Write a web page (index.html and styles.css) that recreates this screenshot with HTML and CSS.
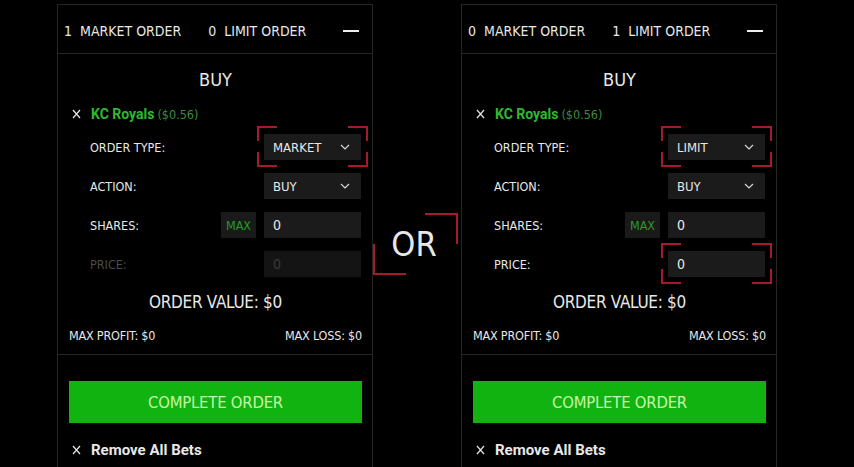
FILE: index.html
```html
<!DOCTYPE html>
<html lang="en">
<head>
	<meta charset="UTF-8">
	<title>Order Ticket</title>
	<link rel="stylesheet" href="styles.css">
</head>
<body>
	<div class="stage">

		<!-- market order ticket -->
		<section class="ticket">
			<div class="ticket-head">
				<span class="tab">1&nbsp; MARKET ORDER</span>
				<span class="tab">0&nbsp; LIMIT ORDER</span>
				<span class="minus"></span>
			</div>
			<div class="ticket-body">
				<div class="side">BUY</div>
				<div class="bet">
					<svg class="x-icon" width="9" height="10" viewBox="0 0 9 10"><path d="M1 1 L8 9 M8 1 L1 9" stroke="#e6e6e6" stroke-width="1.2" fill="none"/></svg>
					<span class="team">KC Royals</span>
					<span class="price">($0.56)</span>
				</div>
				<div class="row">
					<span class="label">ORDER TYPE:</span>
					<div class="field hl">
						<div class="select">MARKET
							<svg width="10" height="6" viewBox="0 0 10 6"><path d="M1 1 L5 5 L9 1" stroke="#ddd" stroke-width="1.1" fill="none"/></svg>
						</div>
					</div>
				</div>
				<div class="row">
					<span class="label">ACTION:</span>
					<div class="field">
						<div class="select">BUY
							<svg width="10" height="6" viewBox="0 0 10 6"><path d="M1 1 L5 5 L9 1" stroke="#ddd" stroke-width="1.1" fill="none"/></svg>
						</div>
					</div>
				</div>
				<div class="row">
					<span class="label">SHARES:</span>
					<span class="max">MAX</span>
					<div class="field">
						<div class="input">0</div>
					</div>
				</div>
				<div class="row off">
					<span class="label">PRICE:</span>
					<div class="field">
						<div class="input">0</div>
					</div>
				</div>
				<div class="value">ORDER VALUE: $0</div>
				<div class="limits">
					<span>MAX PROFIT: $0</span>
					<span>MAX LOSS: $0</span>
				</div>
			</div>
			<div class="ticket-foot">
				<button class="complete">COMPLETE ORDER</button>
				<div class="remove">
					<svg class="x-icon" width="9" height="10" viewBox="0 0 9 10"><path d="M1 1 L8 9 M8 1 L1 9" stroke="#e6e6e6" stroke-width="1.2" fill="none"/></svg>
					<span>Remove All Bets</span>
				</div>
			</div>
		</section>

		<div class="or-col">
			<div class="or">OR</div>
		</div>

		<!-- limit order ticket -->
		<section class="ticket">
			<div class="ticket-head">
				<span class="tab">0&nbsp; MARKET ORDER</span>
				<span class="tab">1&nbsp; LIMIT ORDER</span>
				<span class="minus"></span>
			</div>
			<div class="ticket-body">
				<div class="side">BUY</div>
				<div class="bet">
					<svg class="x-icon" width="9" height="10" viewBox="0 0 9 10"><path d="M1 1 L8 9 M8 1 L1 9" stroke="#e6e6e6" stroke-width="1.2" fill="none"/></svg>
					<span class="team">KC Royals</span>
					<span class="price">($0.56)</span>
				</div>
				<div class="row">
					<span class="label">ORDER TYPE:</span>
					<div class="field hl">
						<div class="select">LIMIT
							<svg width="10" height="6" viewBox="0 0 10 6"><path d="M1 1 L5 5 L9 1" stroke="#ddd" stroke-width="1.1" fill="none"/></svg>
						</div>
					</div>
				</div>
				<div class="row">
					<span class="label">ACTION:</span>
					<div class="field">
						<div class="select">BUY
							<svg width="10" height="6" viewBox="0 0 10 6"><path d="M1 1 L5 5 L9 1" stroke="#ddd" stroke-width="1.1" fill="none"/></svg>
						</div>
					</div>
				</div>
				<div class="row">
					<span class="label">SHARES:</span>
					<span class="max">MAX</span>
					<div class="field">
						<div class="input">0</div>
					</div>
				</div>
				<div class="row">
					<span class="label">PRICE:</span>
					<div class="field hl">
						<div class="input">0</div>
					</div>
				</div>
				<div class="value">ORDER VALUE: $0</div>
				<div class="limits">
					<span>MAX PROFIT: $0</span>
					<span>MAX LOSS: $0</span>
				</div>
			</div>
			<div class="ticket-foot">
				<button class="complete">COMPLETE ORDER</button>
				<div class="remove">
					<svg class="x-icon" width="9" height="10" viewBox="0 0 9 10"><path d="M1 1 L8 9 M8 1 L1 9" stroke="#e6e6e6" stroke-width="1.2" fill="none"/></svg>
					<span>Remove All Bets</span>
				</div>
			</div>
		</section>

	</div>
</body>
</html>
```

FILE: styles.css
```css
body {
	margin: 0;
	background: #000;
	color: #e8e8e8;
	font-family: "DejaVu Sans Condensed", "Liberation Sans", sans-serif;
	overflow: hidden;
}

.stage {
	display: flex;
	padding: 4px 0 0 57px;
}

/* ticket panel */
.ticket {
	width: 316px;
	height: 480px;
	box-sizing: border-box;
	border: 1px solid #262626;
	border-bottom: none;
}

.ticket-head {
	display: flex;
	align-items: center;
	box-sizing: border-box;
	height: 49px;
	padding: 3px 13px 0 6px;
	border-bottom: 1px solid #262626;
	font-size: 14px;
}
.tab {
	margin-right: 27px;
}
.minus {
	margin-left: auto;
	width: 16px;
	height: 2px;
	background: #eee;
}

.ticket-body {
	padding: 0 10px 10px 11px;
	border-bottom: 1px solid #262626;
}

.side {
	margin-top: 16px;
	font-size: 18px;
	line-height: 20px;
	text-align: center;
}

.bet {
	display: flex;
	align-items: center;
	margin-top: 14px;
	height: 20px;
	padding-left: 3px;
}
.x-icon {
	margin-right: 10px;
}
.team {
	font-family: Roboto, sans-serif;
	font-weight: bold;
	font-size: 14px;
	color: #2fb82f;
	margin-right: 3px;
}
.price {
	font-size: 12.5px;
	color: #3d8c3d;
}

/* form rows */
.row {
	display: flex;
	align-items: center;
	height: 26px;
	margin-top: 13px;
	padding-left: 21px;
	font-size: 12.5px;
}
.bet + .row {
	margin-top: 10px;
}
.label {
	margin-right: auto;
}
.field {
	position: relative;
	width: 97px;
	height: 26px;
	margin-right: 1px;
}
.select, .input {
	display: flex;
	align-items: center;
	justify-content: space-between;
	box-sizing: border-box;
	height: 100%;
	padding: 0 11px 0 9px;
	background: #1b1b1b;
	font-size: 13px;
}
.input {
	font-size: 14px;
}
.max {
	display: flex;
	align-items: center;
	justify-content: center;
	width: 35px;
	height: 26px;
	margin-right: 8px;
	background: #1a1a1a;
	color: #239d23;
	font-size: 12.5px;
}
.row.off .label {
	color: #4a4a4a;
}
.row.off .input {
	background: #141414;
	color: #3a3a3a;
}

/* red corner brackets */
.hl::before {
	content: "";
	position: absolute;
	top: -8px;
	bottom: -7px;
	left: -7px;
	right: -7px;
	background:
		linear-gradient(#a61b2b, #a61b2b) left top / 20px 2px no-repeat,
		linear-gradient(#a61b2b, #a61b2b) left top / 2px 15px no-repeat,
		linear-gradient(#a61b2b, #a61b2b) right top / 20px 2px no-repeat,
		linear-gradient(#a61b2b, #a61b2b) right top / 2px 15px no-repeat,
		linear-gradient(#a61b2b, #a61b2b) left bottom / 20px 2px no-repeat,
		linear-gradient(#a61b2b, #a61b2b) left bottom / 2px 15px no-repeat,
		linear-gradient(#a61b2b, #a61b2b) right bottom / 20px 2px no-repeat,
		linear-gradient(#a61b2b, #a61b2b) right bottom / 2px 15px no-repeat;
}

.value {
	margin-top: 14px;
	font-size: 17px;
	letter-spacing: -0.3px;
	line-height: 22px;
	text-align: center;
}

.limits {
	display: flex;
	justify-content: space-between;
	margin-top: 15px;
	font-size: 12.5px;
	letter-spacing: -0.2px;
	line-height: 16px;
}

.ticket-foot {
	padding: 26px 10px 0 11px;
}
.complete {
	display: block;
	width: 100%;
	height: 42px;
	padding-top: 2px;
	border: none;
	background: #10b310;
	color: #c4f7a6;
	font-family: inherit;
	font-size: 16.5px;
	letter-spacing: -0.2px;
}
.remove {
	display: flex;
	align-items: center;
	margin-top: 17px;
	height: 20px;
	padding-left: 3px;
	font-family: Roboto, sans-serif;
	font-weight: bold;
	font-size: 15px;
}

/* OR divider */
.or-col {
	width: 88px;
	padding-top: 209px;
}
.or {
	display: flex;
	align-items: center;
	justify-content: center;
	height: 62px;
	margin-right: 3px;
	padding-right: 3px;
	font-size: 34px;
	background:
		linear-gradient(#a61b2b, #a61b2b) right top / 33px 2px no-repeat,
		linear-gradient(#a61b2b, #a61b2b) right top / 2px 31px no-repeat,
		linear-gradient(#a61b2b, #a61b2b) left bottom / 33px 2px no-repeat,
		linear-gradient(#a61b2b, #a61b2b) left bottom / 2px 31px no-repeat;
}
```
